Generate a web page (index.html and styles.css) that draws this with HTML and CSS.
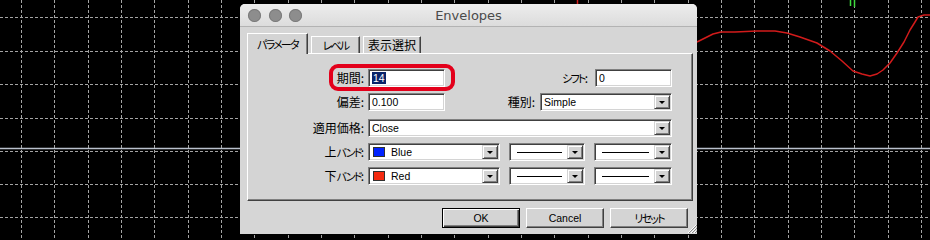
FILE: index.html
```html
<!DOCTYPE html>
<html lang="ja">
<head>
<meta charset="utf-8">
<title>Envelopes</title>
<link rel="stylesheet" href="styles.css">
</head>
<body>
<div class="screen">
  <svg class="chart" width="930" height="240" viewBox="0 0 930 240">
    <path class="grid" d="M21.5 0V240M54.5 0V240M88.5 0V240M121.5 0V240M154.5 0V240M188.5 0V240M221.5 0V240M254.5 0V240M288.5 0V240M321.5 0V240M354.5 0V240M388.5 0V240M421.5 0V240M454.5 0V240M488.5 0V240M521.5 0V240M554.5 0V240M588.5 0V240M621.5 0V240M654.5 0V240M688.5 0V240M721.5 0V240M754.5 0V240M788.5 0V240M821.5 0V240M854.5 0V240M888.5 0V240M921.5 0V240"/>
    <path class="grid" d="M0 17.5H930M0 51.5H930M0 84.5H930M0 118.5H930M0 151.5H930M0 184.5H930M0 217.5H930"/>
    <path class="level" d="M0 148.5H930"/>
    <polyline class="env" points="697,42 705,38 713,34 721,32 735,32 757,31 775,31 787,33 800,37 817,43 830,51 842,61 853,71 862,74 870,76 877,74 883,70 890,63 897,53 904,42 910,30 915,22 918,17 924,15 930,15"/>
    <path class="env" d="M577.5 0V6"/>
    <path class="tick" d="M850.5 0V6M854.5 0V7"/>
  </svg>

  <div class="dialog">
    <div class="titlebar">
      <div class="lights"><span></span><span></span><span></span></div>
      <div class="title">Envelopes</div>
      <div></div>
    </div>
    <div class="content">
      <div class="tabs">
        <div class="tab active t1"><span class="kt">パラメータ</span></div>
        <div class="tab t2"><span class="kt">レベル</span></div>
        <div class="tab t3">表示選択</div>
      </div>
      <div class="panel">
        <div class="rows">
          <div class="row">
            <div class="label">期間:</div>
            <div class="field w77"><span class="val"><span class="sel">14</span></span></div>
            <div class="label2 gap7"><span class="kt">シフト</span>:</div>
            <div class="field w77"><span class="val">0</span></div>
          </div>
          <div class="row">
            <div class="label">偏差:</div>
            <div class="field w77"><span class="val">0.100</span></div>
            <div class="label2 gap5">種別:</div>
            <div class="field w132"><span class="val">Simple</span><span class="arrow"></span></div>
          </div>
          <div class="row r3">
            <div class="label">適用価格:</div>
            <div class="field grow"><span class="val">Close</span><span class="arrow"></span></div>
          </div>
          <div class="row">
            <div class="label">上<span class="kt">バンド</span>:</div>
            <div class="field w132"><span class="swatch blue"></span><span class="val">Blue</span><span class="arrow"></span></div>
            <div class="field w76 ml9"><span class="line"></span><span class="arrow"></span></div>
            <div class="field w78 ml9"><span class="line"></span><span class="arrow"></span></div>
          </div>
          <div class="row">
            <div class="label">下<span class="kt">バンド</span>:</div>
            <div class="field w132"><span class="swatch red"></span><span class="val">Red</span><span class="arrow"></span></div>
            <div class="field w76 ml9"><span class="line"></span><span class="arrow"></span></div>
            <div class="field w78 ml9"><span class="line"></span><span class="arrow"></span></div>
          </div>
        </div>
      </div>
      <div class="buttons">
        <div class="btn default">OK</div>
        <div class="btn">Cancel</div>
        <div class="btn jp"><span class="kt">リセット</span></div>
      </div>
    </div>
    <div class="ring"></div>
    <svg class="grip" width="11" height="11" viewBox="0 0 11 11">
      <path d="M10 2L2 10M10 5L5 10M10 8L8 10" stroke="#ffffff" stroke-width="1"/>
      <path d="M11 2L3 10M11 5L6 10M11 8L9 10" stroke="#8a8a8a" stroke-width="1"/>
    </svg>
  </div>
</div>
</body>
</html>
```
FILE: styles.css
```css
body {
  margin: 0;
  background: #000;
  font-family: "Liberation Sans", "Noto Sans CJK JP", sans-serif;
}

.screen {
  position: relative;
  width: 930px;
  height: 240px;
  overflow: hidden;
  background: #000;
}

.chart {
  position: absolute;
  left: 0;
  top: 0;
}

.grid {
  stroke: #a4a4a4;
  stroke-width: 1;
  stroke-dasharray: 3 2;
  fill: none;
}

.level {
  stroke: #b9c0cc;
  stroke-width: 1.5;
}

.env {
  fill: none;
  stroke: #d21b1b;
  stroke-width: 1.5;
  stroke-linejoin: round;
}

.tick {
  stroke: #3fdc3f;
  stroke-width: 1.5;
}

.dialog {
  position: absolute;
  left: 240px;
  top: 4px;
  width: 457px;
  height: 230px;
  background: #d6d6d6;
  border-radius: 5px 5px 0 0;
  overflow: hidden;
  display: flex;
  flex-direction: column;
}

.titlebar {
  height: 22px;
  flex: none;
  display: grid;
  grid-template-columns: 1fr auto 1fr;
  align-items: center;
  background: linear-gradient(#ededed, #dcdcdc);
  border-bottom: 1px solid #b3b3b3;
}

.lights {
  display: flex;
  gap: 7.5px;
  padding-left: 8px;
}

.lights span {
  width: 13px;
  height: 13px;
  border-radius: 50%;
  background: #8d8d8d;
  box-shadow: inset 0 0 0 1px #7a7a7a;
}

.title {
  font-family: "DejaVu Sans", sans-serif;
  font-size: 13px;
  color: #4a4a4a;
}

.content {
  flex: 1;
  padding: 6px 4px 0 7px;
  display: flex;
  flex-direction: column;
}

.tabs {
  display: flex;
  align-items: flex-end;
  gap: 3px;
  height: 21px;
  margin-bottom: -1px;
  position: relative;
  z-index: 1;
}

.tab {
  height: 17px;
  margin-bottom: 1px;
  box-sizing: border-box;
  border: 1px solid;
  border-bottom: none;
  border-color: #ffffff #404040 transparent #ffffff;
  box-shadow: inset -1px 0 0 #808080;
  background: #d4d4d4;
  display: flex;
  align-items: center;
  justify-content: center;
  font-family: "Noto Sans CJK JP", sans-serif;
  font-feature-settings: "palt";
  font-size: 12px;
  line-height: 12px;
  color: #000;
}

.tab.active {
  height: 21px;
  margin-bottom: 0;
}

.t1 { width: 61px; }
.t2 { width: 49px; }
.t3 { width: 58px; }

.kt {
  font-size: 11px;
  letter-spacing: -1.8px;
}

.panel {
  height: 148px;
  box-sizing: border-box;
  border: 1px solid;
  border-color: #ffffff #404040 #404040 #ffffff;
  box-shadow: inset -1px -1px 0 #808080;
  background: #d4d4d4;
  padding: 15px 20px 0 0;
}

.rows {
  display: flex;
  flex-direction: column;
  gap: 6px;
}

.row {
  display: flex;
  align-items: center;
  height: 18px;
}

.r3 {
  margin-top: 2px;
}

.label,
.label2 {
  font-family: "Noto Sans CJK JP", sans-serif;
  font-feature-settings: "palt";
  font-size: 12px;
  line-height: 12px;
  color: #000;
  white-space: nowrap;
}

.label {
  width: 116px;
  margin-right: 4px;
  text-align: right;
  flex: none;
}

.label2 {
  margin-left: auto;
}

.gap7 { margin-right: 7px; }
.gap5 { margin-right: 5px; }

.field {
  height: 18px;
  box-sizing: border-box;
  flex: none;
  background: #ffffff;
  border: 1px solid;
  border-color: #808080 #ffffff #ffffff #808080;
  box-shadow: inset 1px 1px 0 #404040, inset -1px -1px 0 #d4d4d4;
  padding: 1px;
  display: flex;
  align-items: center;
  font-size: 10.5px;
  color: #000;
}

.w77 { width: 77px; }
.w76 { width: 76px; }
.w78 { width: 78px; }
.w132 { width: 132px; }
.grow { flex: 1; }
.ml9 { margin-left: 9px; }

.val {
  flex: 1;
  padding-left: 2px;
  white-space: nowrap;
  line-height: 12px;
}

.sel {
  background: #0a246a;
  color: #ffffff;
  padding: 0 1px;
}

.swatch {
  width: 12px;
  height: 10px;
  margin-left: 3px;
  margin-right: 4px;
  box-sizing: border-box;
  border: 1px solid #303030;
  flex: none;
}

.swatch.blue { background: #0022ff; }
.swatch.red { background: #f42a10; }

.line {
  flex: 1;
  height: 1px;
  background: #000;
  margin: 0 5px 0 6px;
}

.arrow {
  width: 16px;
  align-self: stretch;
  flex: none;
  box-sizing: border-box;
  background: #d4d4d4;
  border: 1px solid;
  border-color: #d4d4d4 #404040 #404040 #d4d4d4;
  box-shadow: inset 1px 1px 0 #ffffff, inset -1px -1px 0 #808080;
  display: flex;
  align-items: center;
  justify-content: center;
}

.arrow::after {
  content: "";
  border-left: 3px solid transparent;
  border-right: 3px solid transparent;
  border-top: 3px solid #000;
}

.buttons {
  display: flex;
  justify-content: flex-end;
  gap: 6px;
  margin-top: 7px;
  padding-right: 5px;
}

.btn {
  width: 78px;
  height: 20px;
  box-sizing: border-box;
  border: 1px solid;
  border-color: #ffffff #404040 #404040 #ffffff;
  box-shadow: inset -1px -1px 0 #808080;
  background: #d4d4d4;
  display: flex;
  align-items: center;
  justify-content: center;
  font-size: 10.5px;
  color: #000;
}

.btn.jp {
  font-family: "Noto Sans CJK JP", sans-serif;
  font-feature-settings: "palt";
  font-size: 11px;
}

.btn.default {
  border-color: #000;
  box-shadow: inset 1px 1px 0 #ffffff, inset -1px -1px 0 #404040, inset -2px -2px 0 #808080;
}

.ring {
  position: absolute;
  left: 89px;
  top: 60px;
  width: 126px;
  height: 27px;
  box-sizing: border-box;
  border: 4px solid #e3001b;
  border-radius: 9px;
}

.grip {
  position: absolute;
  right: 0;
  bottom: 0;
}
```
